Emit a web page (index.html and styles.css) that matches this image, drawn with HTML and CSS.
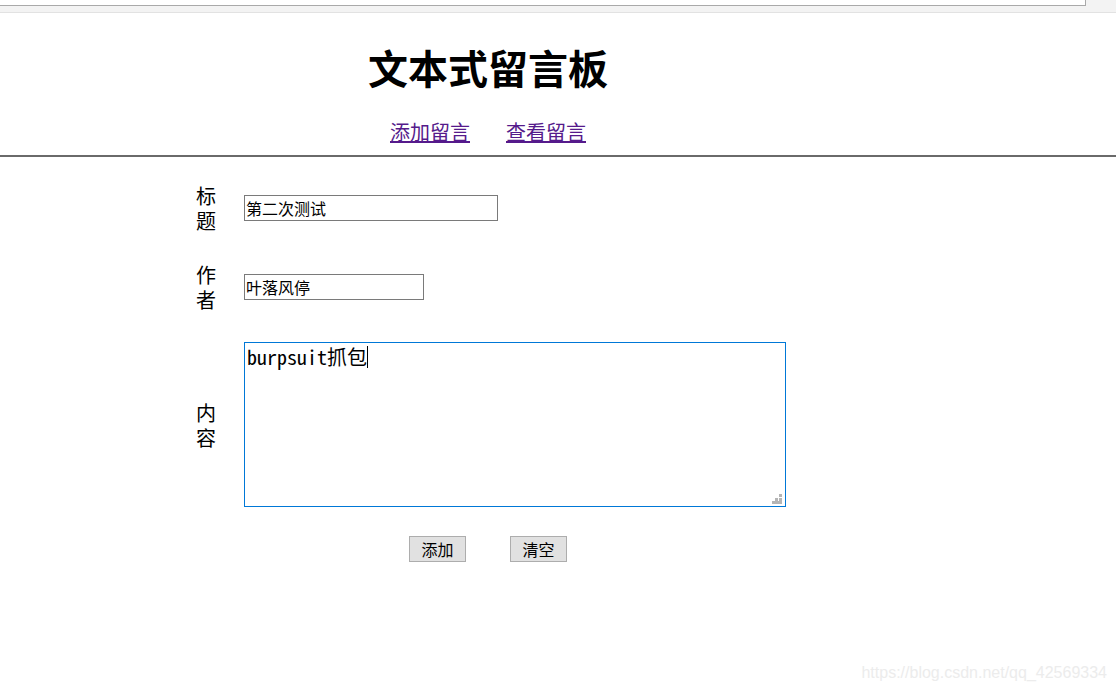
FILE: index.html
```html
<!DOCTYPE html>
<html lang="zh-CN">
<head>
    <meta charset="UTF-8">
    <meta name="viewport" content="width=device-width, initial-scale=1.0">
    <title>文本式留言板</title>
    <link rel="stylesheet" href="styles.css">
</head>
<body>
    <div class="chrome">
        <div class="chrome-bar"></div>
    </div>

    <div class="page">
        <div class="header">
            <h1 class="title">文本式留言板</h1>
            <div class="nav">
                <a href="#add" class="nav-link">添加留言</a>
                <a href="#list" class="nav-link">查看留言</a>
            </div>
        </div>
    </div>

    <hr class="divider">

    <div class="page">
        <form class="message-form">
            <div class="row">
                <label class="label" for="title">标题</label>
                <input id="title" class="field field-title" type="text" value="第二次测试">
            </div>
            <div class="row">
                <label class="label" for="author">作者</label>
                <input id="author" class="field field-author" type="text" value="叶落风停">
            </div>
            <div class="row row-content">
                <label class="label" for="content">内容</label>
                <div class="content-box">
                    <textarea id="content" class="field-content">burpsuit抓包</textarea>
                    <span class="caret"></span>
                    <span class="grip"></span>
                </div>
            </div>
            <div class="actions">
                <button type="button" class="btn">添加</button>
                <button type="reset" class="btn">清空</button>
            </div>
        </form>
    </div>

    <div class="watermark">https://blog.csdn.net/qq_42569334</div>
</body>
</html>
```

FILE: styles.css
```css
body {
    margin: 0;
    font-family: "Noto Sans CJK SC", "Liberation Sans", sans-serif;
    color: #000;
    background-color: #fff;
}
.chrome {
    height: 12px;
    background-color: #f3f3f3;
    border-bottom: 1px solid #e2e2e2;
}
.chrome-bar {
    width: 1086px;
    height: 6px;
    box-sizing: border-box;
    background-color: #fff;
    border-bottom: 1px solid #a9a9a9;
    border-right: 1px solid #a9a9a9;
}
.page {
    width: 976px;
}
.header {
    display: flex;
    flex-direction: column;
    align-items: center;
    padding-top: 30px;
}
.title {
    margin: 0;
    font-size: 40px;
    line-height: 48px;
    font-weight: bold;
}
.nav {
    display: flex;
    gap: 36px;
    margin-top: 29px;
}
.nav-link {
    font-size: 20px;
    line-height: 24px;
    color: #551a8b;
}
.divider {
    margin: 11px 0 0;
    border: none;
    border-top: 2px solid #6a6a6a;
}
.message-form {
    padding: 26px 0 0 196px;
    display: flex;
    flex-direction: column;
    gap: 29px;
}
.row {
    display: flex;
    align-items: center;
}
.row-content {
    margin-top: 1px;
}
.label {
    width: 20px;
    font-size: 20px;
    line-height: 25px;
    margin-right: 28px;
}
.field {
    height: 26px;
    box-sizing: border-box;
    border: 1px solid #7a7a7a;
    padding: 0 1px;
    font-family: "Noto Sans CJK SC", sans-serif;
    font-size: 16px;
    color: #000;
    outline: none;
}
.field-title {
    width: 254px;
}
.field-author {
    width: 180px;
}
.content-box {
    position: relative;
    width: 542px;
    height: 165px;
}
.field-content {
    display: block;
    width: 100%;
    height: 100%;
    box-sizing: border-box;
    border: 1px solid #0078d7;
    padding: 1px 2px;
    resize: none;
    outline: none;
    font-family: "Noto Sans Mono CJK SC", "Liberation Mono", monospace;
    font-size: 20px;
    line-height: 26px;
    color: #000;
}
.caret {
    position: absolute;
    left: 123px;
    top: 4px;
    width: 1px;
    height: 22px;
    background-color: #000;
}
.grip {
    position: absolute;
    right: 4px;
    bottom: 3px;
    width: 10px;
    height: 10px;
    background:
        linear-gradient(#b5b5b5, #b5b5b5) 7px 0 / 3px 3px no-repeat,
        linear-gradient(#b5b5b5, #b5b5b5) 3px 4px / 3px 3px no-repeat,
        linear-gradient(#b5b5b5, #b5b5b5) 7px 4px / 3px 3px no-repeat,
        linear-gradient(#b5b5b5, #b5b5b5) 0 7px / 10px 3px no-repeat;
}
.actions {
    display: flex;
    justify-content: center;
    gap: 44px;
    width: 584px;
}
.btn {
    width: 57px;
    height: 26px;
    padding: 0;
    background-color: #e1e1e1;
    border: 1px solid #adadad;
    border-radius: 0;
    font-family: "Noto Sans CJK SC", sans-serif;
    font-size: 16px;
    line-height: 22px;
    color: #000;
}
.watermark {
    position: absolute;
    right: 9px;
    bottom: 11px;
    font-family: "Liberation Sans", sans-serif;
    font-size: 16px;
    color: #ececec;
}
```
